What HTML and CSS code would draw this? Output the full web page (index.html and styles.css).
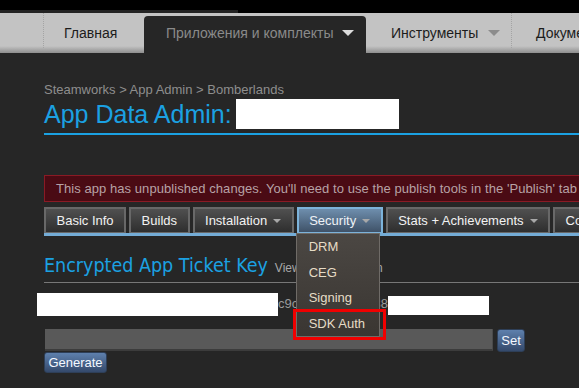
FILE: index.html
```html
<!DOCTYPE html>
<html lang="ru">
<head>
<meta charset="utf-8">
<title>App Data Admin</title>
<link rel="stylesheet" href="styles.css">
</head>
<body>
<div class="topbar"><div class="topstrip"></div></div>
<nav class="nav">
  <div class="nav-lead"></div>
  <div class="nav-item home">Главная</div>
  <div class="nav-item active">Приложения и комплекты <span class="caret light"></span></div>
  <div class="nav-item tools">Инструменты <span class="caret gray"></span></div>
  <div class="nav-item docs">Документация</div>
</nav>
<main class="content">
  <div class="crumbs">Steamworks &gt; App Admin &gt; Bomberlands</div>
  <h1 class="title"><span class="title-text">App Data Admin:</span><span class="redact title-redact"></span></h1>
  <div class="alert">This app has unpublished changes. You'll need to use the publish tools in the 'Publish' tab to make them live.</div>
  <div class="tabs">
    <div class="tab">Basic Info</div>
    <div class="tab">Builds</div>
    <div class="tab">Installation <span class="tcaret"></span></div>
    <div class="tab-wrap">
      <div class="tab selected">Security <span class="tcaret"></span></div>
      <ul class="menu">
        <li>DRM</li>
        <li>CEG</li>
        <li>Signing</li>
        <li>SDK Auth</li>
      </ul>
      <span class="hl-box"></span>
    </div>
    <div class="tab">Stats + Achievements <span class="tcaret"></span></div>
    <div class="tab">Community <span class="tcaret"></span></div>
  </div>
  <h2 class="section"><span class="section-title">Encrypted App Ticket Key</span><span class="doc">View documentation</span></h2>
  <div class="keyrow">
    <span class="redact key-redact1"></span>
    <span class="keytext"><span>c9c4</span><span>38</span></span>
    <span class="redact key-redact2"></span>
  </div>
  <div class="inputrow">
    <input class="keyinput" type="text">
    <button class="btn set">Set</button>
  </div>
  <button class="btn gen">Generate</button>
</main>
</body>
</html>
```
FILE: styles.css
```css
html, body {
  margin: 0;
  padding: 0;
  overflow: hidden;
}
body {
  width: 579px;
  height: 388px;
  background: #262626;
  font-family: "Liberation Sans", Arial, sans-serif;
}
.topbar {
  height: 13px;
  background: #000;
  display: flex;
  align-items: flex-end;
}
.topstrip {
  width: 238px;
  height: 3px;
  background: #232323;
}
.nav {
  width: 900px;
  height: 40px;
  display: flex;
  background: linear-gradient(to bottom, #c3c3c3 0, #c3c3c3 33px, #8e8e8e 40px);
}
.nav-lead {
  width: 44px;
  height: 35px;
  border-right: 1px dotted #a4a4a4;
  box-sizing: border-box;
}
.nav-item {
  font-size: 14px;
  color: #1c1c1c;
  display: flex;
  align-items: center;
  box-sizing: border-box;
  height: 40px;
}
.home {
  width: 100px;
  padding-left: 20px;
}
.active {
  width: 222px;
  margin-top: 3px;
  height: 37px;
  padding-left: 22px;
  padding-bottom: 3px;
  background: #262626;
  color: #8a8a8a;
  border-radius: 4px 4px 0 0;
}
.tools {
  width: 146px;
  padding-left: 25px;
  height: 35px;
  margin-top: 0;
  padding-top: 5px;
  border-right: 1px dotted #a4a4a4;
}
.docs {
  padding-left: 24px;
}
.caret {
  display: inline-block;
  width: 0;
  height: 0;
  margin-left: 8px;
  border-left: 6px solid transparent;
  border-right: 6px solid transparent;
  border-top: 6px solid #dcdcdc;
}
.caret.gray {
  border-top-color: #8c8c8c;
  margin-left: 10px;
}
.content {
  width: 900px;
  padding-left: 44px;
  box-sizing: border-box;
}
.crumbs {
  padding-top: 29px;
  font-size: 13px;
  line-height: 15px;
  color: #8e8e8e;
}
.title {
  margin: 2px 0 0;
  padding-bottom: 4px;
  height: 30px;
  display: flex;
  align-items: center;
  font-weight: normal;
  font-size: 25px;
  line-height: 30px;
  color: #1ba1e2;
  border-bottom: 2px solid #1ba1e2;
}
.redact {
  display: block;
  background: #fff;
}
.title-redact {
  width: 163px;
  height: 30px;
  margin-left: 4px;
}
.alert {
  margin-top: 40px;
  height: 25px;
  line-height: 25px;
  padding-left: 11px;
  font-size: 13px;
  letter-spacing: 0.06px;
  color: #b7a2a6;
  background: #4a0b14;
  border: 1px solid #8a1a24;
  white-space: nowrap;
}
.tabs {
  margin-top: 5px;
  display: flex;
  gap: 3px;
  border-bottom: 3px solid #74acd6;
}
.tab {
  height: 26px;
  box-sizing: border-box;
  padding: 0 10.5px;
  display: flex;
  align-items: center;
  font-size: 13px;
  color: #f2f2f2;
  border: 2px solid #686868;
  border-bottom-width: 1px;
  background: linear-gradient(to bottom, #505050, #2e2e2e);
  white-space: nowrap;
}
.tab.selected {
  border-color: #7cb3da;
  background: linear-gradient(to bottom, #6e8ead, #3f5268);
  color: #eef2f6;
}
.tcaret {
  display: inline-block;
  width: 0;
  height: 0;
  margin-left: 6px;
  border-left: 4px solid transparent;
  border-right: 4px solid transparent;
  border-top: 4px solid #a8a8a8;
}
.tab-wrap {
  position: relative;
}
.menu {
  position: absolute;
  left: -1px;
  top: 26px;
  width: 84px;
  margin: 0;
  padding: 0;
  list-style: none;
  box-sizing: border-box;
  border: 1px solid #6f6b67;
  background: linear-gradient(to bottom, #4b4743, #3a3632);
  z-index: 2;
}
.menu li {
  height: 25.5px;
  line-height: 25px;
  padding-left: 12px;
  font-size: 13px;
  color: #e6dcc6;
}
.hl-box {
  position: absolute;
  left: -4px;
  top: 102px;
  width: 93px;
  height: 31px;
  box-sizing: border-box;
  border: 3px solid #f00000;
  z-index: 3;
}
.section {
  margin: 18px 0 0;
  padding-bottom: 4px;
  height: 24px;
  display: flex;
  align-items: baseline;
  font-weight: normal;
  border-bottom: 1px solid #777;
}
.section-title {
  font-family: "DejaVu Sans Condensed", "DejaVu Sans", sans-serif;
  font-size: 19.5px;
  line-height: 24px;
  color: #1ba1e2;
}
.doc {
  margin-left: 7px;
  font-size: 12px;
  color: #a9a9a9;
}
.keyrow {
  margin-top: 10px;
  display: flex;
  align-items: flex-start;
  height: 23px;
}
.key-redact1 {
  width: 241px;
  height: 23px;
  margin-left: -7px;
}
.keytext {
  width: 110px;
  display: flex;
  justify-content: space-between;
  font-size: 13px;
  line-height: 18px;
  padding-top: 2px;
  color: #9a9a9a;
}
.key-redact2 {
  width: 101px;
  height: 19px;
  margin-top: 3px;
}
.inputrow {
  margin-top: 13px;
  display: flex;
  gap: 4px;
  align-items: flex-start;
}
.keyinput {
  width: 448px;
  height: 22px;
  margin: 0 0 0 1px;
  padding: 0;
  box-sizing: border-box;
  border: none;
  border-right: 1px solid #4a4a4a;
  border-bottom: 2px solid #3c3c3c;
  background: #595959;
}
.btn {
  display: block;
  margin: 0;
  padding: 0;
  border: 1px solid #2e3f58;
  border-radius: 3px;
  background: linear-gradient(to bottom, #5e80ad, #34496b);
  color: #f4f8ff;
  font-family: "Liberation Sans", Arial, sans-serif;
  font-size: 13px;
  text-align: center;
}
.set {
  width: 28px;
  height: 23px;
}
.gen {
  width: 63px;
  height: 21px;
}
```
